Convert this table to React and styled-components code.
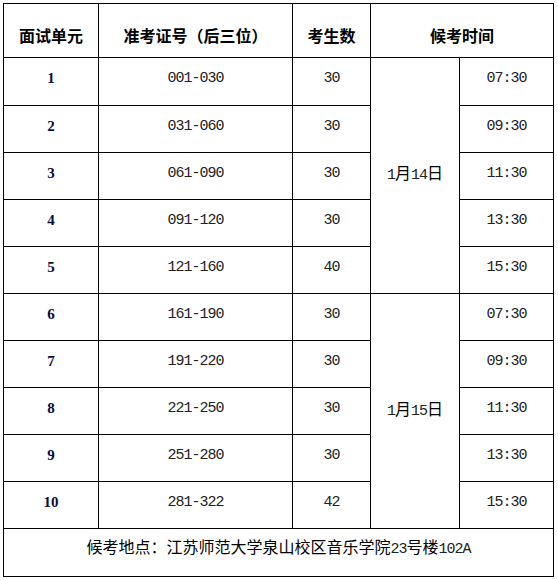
import React from "react";
import styled, { createGlobalStyle } from "styled-components";

const Global = createGlobalStyle`
  html, body { margin: 0; padding: 0; background: #fff; }
  body { font-family: "Noto Sans CJK SC", "Liberation Sans", sans-serif; color: #000; }
`;

const Page = styled.div`
  padding: 3px;
`;

const Grid = styled.div`
  display: grid;
  width: 551px;
  box-sizing: border-box;
  grid-template-columns: 94px 193px 77px 88px 93px;
  grid-template-rows: 53px 47px repeat(9, 46px) 47px;
  gap: 1px;
  padding: 1px;
  background: #000;
`;

const Cell = styled.div`
  background: #fff;
  display: flex;
  align-items: center;
  justify-content: center;
  line-height: 1;
  font-size: 16px;
  padding-bottom: 6px;
  box-sizing: border-box;
  grid-row: ${(p) => (p.$rowSpan ? `span ${p.$rowSpan}` : "auto")};
  grid-column: ${(p) => (p.$colSpan ? `span ${p.$colSpan}` : "auto")};
`;

const HeadCell = styled(Cell)`
  font-weight: bold;
  padding-bottom: 0;
  padding-top: 9px;
`;

const UnitCell = styled(Cell)`
  font-family: "Liberation Serif", serif;
  font-weight: bold;
  font-size: 15px;
  color: #0c0c3a;
`;

const MonoCell = styled(Cell)`
  font-family: "Liberation Mono", "Noto Sans CJK SC", monospace;
  font-size: 15px;
  letter-spacing: -1px;
  color: #222;
`;

const DateCell = styled(Cell)`
  padding-bottom: 4px;
  font-size: 16px;
`;

const Line = styled.span`
  white-space: nowrap;
`;

const Digits = styled.span`
  font-family: "Liberation Mono", monospace;
  font-size: 15px;
  letter-spacing: -1px;
  color: #222;
`;

const Footer = styled(Cell)`
  grid-column: 1 / -1;
  padding-bottom: 10px;
`;

const rows = [
  ["1", "001-030", "30", "07:30"],
  ["2", "031-060", "30", "09:30"],
  ["3", "061-090", "30", "11:30"],
  ["4", "091-120", "30", "13:30"],
  ["5", "121-160", "40", "15:30"],
  ["6", "161-190", "30", "07:30"],
  ["7", "191-220", "30", "09:30"],
  ["8", "221-250", "30", "11:30"],
  ["9", "251-280", "30", "13:30"],
  ["10", "281-322", "42", "15:30"],
];

const dates = { 0: "14", 5: "15" };

export default function App() {
  return (
    <Page>
      <Global />
      <Grid>
        <HeadCell>面试单元</HeadCell>
        <HeadCell>准考证号（后三位）</HeadCell>
        <HeadCell>考生数</HeadCell>
        <HeadCell $colSpan={2}>候考时间</HeadCell>
        {rows.map((r, i) => (
          <React.Fragment key={i}>
            <UnitCell>{r[0]}</UnitCell>
            <MonoCell>{r[1]}</MonoCell>
            <MonoCell>{r[2]}</MonoCell>
            {dates[i] && (
              <DateCell $rowSpan={5}>
                <Line>
                  <Digits>1</Digits>月<Digits>{dates[i]}</Digits>日
                </Line>
              </DateCell>
            )}
            <MonoCell>{r[3]}</MonoCell>
          </React.Fragment>
        ))}
        <Footer>
          <Line>
            候考地点：江苏师范大学泉山校区音乐学院<Digits>23</Digits>号楼<Digits>102A</Digits>
          </Line>
        </Footer>
      </Grid>
    </Page>
  );
}
